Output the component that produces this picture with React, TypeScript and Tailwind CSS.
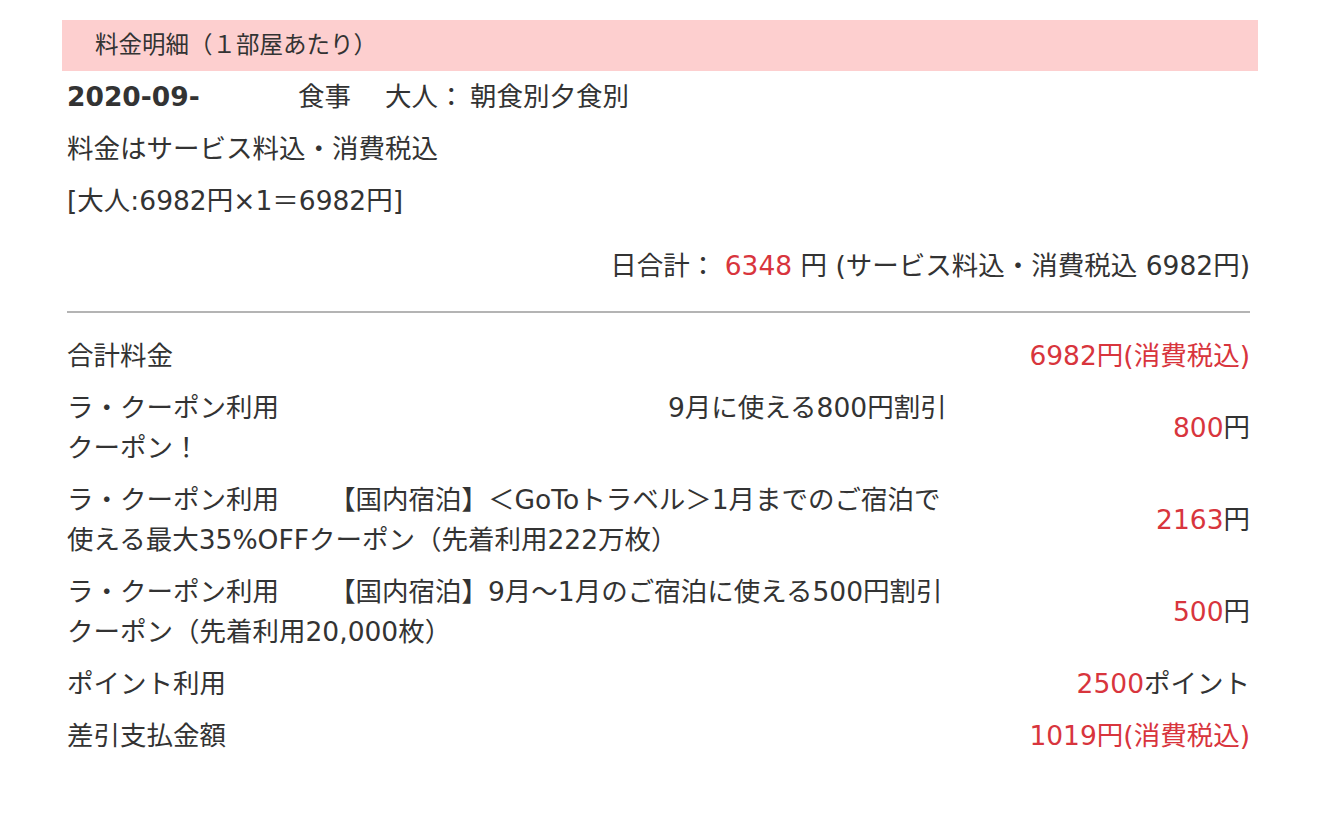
const red = 'text-[#d8353d]';

function CouponRow({ head, offset, line1, line2, amount }: { head: string; offset: string; line1: string; line2: string; amount: string }) {
  return (
    <div className="flex items-center justify-between py-[6px]">
      <div className="leading-[40px] whitespace-nowrap">
        <div className="flex">
          <span className={offset}>{head}</span>
          <span>{line1}</span>
        </div>
        <div>{line2}</div>
      </div>
      <div className="leading-[40px]">
        <span className={red}>{amount}</span>円
      </div>
    </div>
  );
}

export default function App() {
  return (
    <div className="min-h-screen bg-white pt-[20px] text-[#333] font-['DejaVu_Sans','Noto_Sans_CJK_JP',sans-serif]">
      <div className="ml-[62px] w-[1196px]">
        {/* header */}
        <div className="h-[51px] bg-[#fdcfcf] pl-[33px] flex items-center text-[23.5px]">
          料金明細（１部屋あたり）
        </div>

        <div className="pl-[5px] pr-[8px] text-[26.5px]">
          <div className="h-[52px] flex items-center">
            <span className="w-[231px] font-bold">2020-09-</span>
            <span className="w-[87px]">食事</span>
            <span className="w-[85px]">大人：</span>
            <span>朝食別夕食別</span>
          </div>
          <div className="h-[52px] flex items-center">料金はサービス料込・消費税込</div>
          <div className="h-[52px] flex items-center">[大人:6982円×1＝6982円]</div>

          <div className="h-[52px] mt-[13px] flex items-center justify-end">
            日合計：&nbsp;<span className={red}>6348</span>&nbsp;円 (サービス料込・消費税込 6982円)
          </div>

          <div className="mt-[19px] mb-[17px] h-[2px] bg-[#b4b4b4]" />

          <div className="flex items-center justify-between h-[52px]">
            <span>合計料金</span>
            <span className={red}>6982円(消費税込)</span>
          </div>
          <CouponRow head="ラ・クーポン利用" offset="w-[601px]" line1="9月に使える800円割引" line2="クーポン！" amount="800" />
          <CouponRow
            head="ラ・クーポン利用"
            offset="w-[262px]"
            line1="【国内宿泊】＜GoToトラベル＞1月までのご宿泊で"
            line2="使える最大35%OFFクーポン（先着利用222万枚）"
            amount="2163"
          />
          <CouponRow
            head="ラ・クーポン利用"
            offset="w-[262px]"
            line1="【国内宿泊】9月～1月のご宿泊に使える500円割引"
            line2="クーポン（先着利用20,000枚）"
            amount="500"
          />
          <div className="flex items-center justify-between h-[52px]">
            <span>ポイント利用</span>
            <span>
              <span className={red}>2500</span>ポイント
            </span>
          </div>
          <div className="flex items-center justify-between h-[52px]">
            <span>差引支払金額</span>
            <span className={red}>1019円(消費税込)</span>
          </div>
        </div>
      </div>
    </div>
  );
}
